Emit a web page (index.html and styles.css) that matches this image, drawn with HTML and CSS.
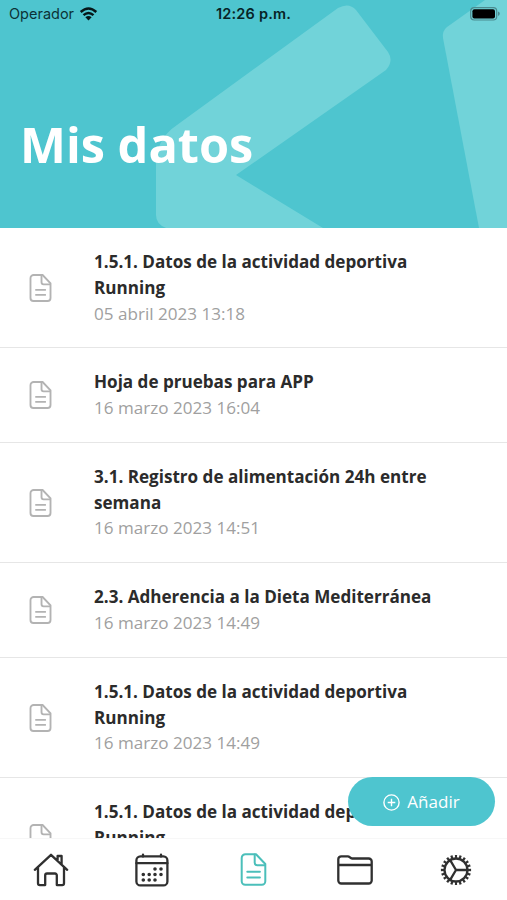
FILE: index.html
```
<!DOCTYPE html>
<html lang="es">
<head>
    <meta charset="UTF-8">
    <meta name="viewport" content="width=device-width, initial-scale=1.0">
    <title>Mis datos</title>
    <link rel="stylesheet" href="styles.css">
</head>
<body>
    <!-- Iconos compartidos -->
    <svg class="sprite">
        <symbol id="icon-doc" viewBox="0 0 26 33">
            <path d="M5 1.2h10.5L24.8 11v17.3a3.5 3.5 0 0 1-3.5 3.5H4.7a3.5 3.5 0 0 1-3.5-3.5V5A3.8 3.8 0 0 1 5 1.2z"/>
            <path d="M14.2 1.6v8.2a2.4 2.4 0 0 0 2.4 2.4h7.8M6.8 18.7h12.6M6.8 24.6h12.6"/>
        </symbol>
    </svg>

    <div class="app">
        <header class="header">
            <svg class="header-shapes" viewBox="0 0 507 228">
                <path d="M338 8Q349 2 356 10L388 52Q394 61 386 70L236 175L323 228H166Q156 224 156 215V164Q156 139 177 125z"/>
                <path d="M507 0H485L447 27Q442 31 443 38L479 228H507z"/>
            </svg>
            <div class="status-bar">
                <div class="status-left">
                    <span>Operador</span>
                    <svg class="wifi" viewBox="0 0 18 14">
                        <path d="M1.2 5Q9-2 16.8 5M4 8.1Q9 3.8 14 8.1" fill="none" stroke="#061719" stroke-width="2.5"/>
                        <path d="M5.9 10.3Q9 7.8 12.1 10.3L9 13.6z" fill="#061719"/>
                    </svg>
                </div>
                <span class="status-time">12:26 p.m.</span>
                <div class="status-right">
                    <svg class="battery" viewBox="0 0 30 14">
                        <rect x=".7" y=".7" width="26" height="12.3" rx="3.5" fill="none" stroke="#4b8b90" stroke-width="1.2"/>
                        <rect x="2.4" y="2.3" width="22.6" height="9.1" rx="2" fill="#000"/>
                        <path d="M28 4.6q1.8.6 1.8 2.2T28 9z" fill="#4b8b90"/>
                    </svg>
                </div>
            </div>
            <h1>Mis datos</h1>
        </header>

        <main class="list">
            <div class="item">
                <svg class="item-icon"><use href="#icon-doc"/></svg>
                <div class="item-text">
                    <h2>1.5.1. Datos de la actividad deportiva Running</h2>
                    <p>05 abril 2023 13:18</p>
                </div>
            </div>
            <div class="item">
                <svg class="item-icon"><use href="#icon-doc"/></svg>
                <div class="item-text">
                    <h2>Hoja de pruebas para APP</h2>
                    <p>16 marzo 2023 16:04</p>
                </div>
            </div>
            <div class="item">
                <svg class="item-icon"><use href="#icon-doc"/></svg>
                <div class="item-text">
                    <h2>3.1. Registro de alimentación 24h entre semana</h2>
                    <p>16 marzo 2023 14:51</p>
                </div>
            </div>
            <div class="item">
                <svg class="item-icon"><use href="#icon-doc"/></svg>
                <div class="item-text">
                    <h2>2.3. Adherencia a la Dieta Mediterránea</h2>
                    <p>16 marzo 2023 14:49</p>
                </div>
            </div>
            <div class="item">
                <svg class="item-icon"><use href="#icon-doc"/></svg>
                <div class="item-text">
                    <h2>1.5.1. Datos de la actividad deportiva Running</h2>
                    <p>16 marzo 2023 14:49</p>
                </div>
            </div>
            <div class="item">
                <svg class="item-icon"><use href="#icon-doc"/></svg>
                <div class="item-text">
                    <h2>1.5.1. Datos de la actividad deportiva Running</h2>
                </div>
            </div>
        </main>

        <button class="button-add">
            <svg class="add-icon" viewBox="0 0 17 17">
                <circle cx="8.5" cy="8.5" r="7.6"/>
                <path d="M8.5 4.7v7.6M4.7 8.5h7.6"/>
            </svg>
            <span>Añadir</span>
        </button>

        <nav class="tabs">
            <a class="tab">
                <svg width="36" height="34" viewBox="0 0 36 34">
                    <path d="M1.8 16.8L18 1.8l16.2 15M5 14.5v15.8a1.8 1.8 0 0 0 1.8 1.8h5.4v-9.8a1.8 1.8 0 0 1 1.8-1.8h8a1.8 1.8 0 0 1 1.8 1.8v9.8h5.4a1.8 1.8 0 0 0 1.8-1.8V14.5M24.6 7V3h4v8"/>
                </svg>
            </a>
            <a class="tab">
                <svg width="34" height="34" viewBox="0 0 34 34">
                    <rect x="1.4" y="3.4" width="31" height="29" rx="4"/>
                    <path d="M1.4 10.2h31M8 1.6v2M26 1.6v2"/>
                    <path class="dots" d="M20 16h0M26 16h0M8.3 21.5h0M14.2 21.5h0M20 21.5h0M26 21.5h0M8.3 27h0M14.2 27h0M20 27h0"/>
                </svg>
            </a>
            <a class="tab active">
                <svg width="27" height="33"><use href="#icon-doc"/></svg>
            </a>
            <a class="tab">
                <svg width="36" height="30" viewBox="0 0 36 30">
                    <path d="M1.3 25.5V4.3a3 3 0 0 1 3-3h6.5c2 0 2.3 2.2 4.3 2.2h16.6a3 3 0 0 1 3 3v19a3 3 0 0 1-3 3H4.3a3 3 0 0 1-3-3zM1.3 10h33.4"/>
                </svg>
            </a>
            <a class="tab">
                <svg width="32" height="32" viewBox="0 0 32 32">
                    <circle cx="16" cy="16" r="11.5"/>
                    <circle class="teeth" cx="16" cy="16" r="13.5" pathLength="100"/>
                    <path d="M16 16h12M16 16L10 5.8M16 16l-6 10.2"/>
                </svg>
            </a>
        </nav>
    </div>
</body>
</html>
```
FILE: styles.css
```
* {
    box-sizing: border-box;
}

body {
    margin: 0;
    font-family: "Open Sans", "Noto Sans", sans-serif;
    background-color: #fff;
    color: #2b2b2b;
}

svg {
    display: block;
    flex-shrink: 0;
}

.sprite {
    display: none;
}

.app {
    position: relative;
    display: flex;
    flex-direction: column;
    height: 900px;
    overflow: hidden;
}

.header {
    position: relative;
    height: 228px;
    flex-shrink: 0;
    background-color: #4ec5cf;
}

.header-shapes {
    position: absolute;
    inset: 0;
    width: 100%;
    height: 100%;
    fill: #71d3d9;
}

.status-bar {
    position: relative;
    display: grid;
    grid-template-columns: 1fr auto 1fr;
    height: 27px;
    padding: 0 7px 0 9px;
    align-items: center;
    font-family: Inter, "Liberation Sans", sans-serif;
    font-size: 14.5px;
    color: #0c3236;
}

.status-left {
    display: flex;
    gap: 5px;
    align-items: center;
}

.wifi {
    width: 19px;
    height: 14px;
}

.status-time {
    margin-right: 2px;
    font-weight: 600;
    letter-spacing: 0.2px;
    color: #072326;
}

.status-right {
    display: flex;
    justify-content: flex-end;
}

.battery {
    width: 30px;
    height: 14px;
}

.header h1 {
    position: relative;
    margin: 84px 0 0 20px;
    font-size: 48.7px;
    line-height: 66px;
    font-weight: 700;
    color: #fff;
}

.list {
    flex: 1;
    min-height: 0;
    overflow: hidden;
}

.item {
    display: flex;
    align-items: center;
    padding: 21.2px 60px 21px 29px;
    border-bottom: 1px solid #e6e6e6;
}

.item-icon {
    width: 23px;
    height: 28px;
    margin-right: 42px;
    fill: none;
    stroke: #b3b3b3;
    stroke-width: 2.2;
}

.item h2,
.item p {
    margin: 0;
    font-size: 17.08px;
    line-height: 25.7px;
}

.item h2 {
    font-weight: 700;
}

.item p {
    color: #a0a0a0;
}

.item:last-child {
    height: 121px;
    align-items: flex-start;
}

.item:last-child .item-icon {
    margin-top: 25px;
}

.button-add {
    position: absolute;
    right: 12px;
    bottom: 74px;
    display: flex;
    align-items: center;
    justify-content: center;
    gap: 7px;
    width: 147px;
    height: 49px;
    padding: 0;
    border: none;
    border-radius: 25px;
    background-color: #4ec5cf;
    color: #fff;
    font-family: inherit;
    font-size: 17px;
}

.add-icon {
    width: 17px;
    height: 17px;
    margin-top: 2px;
    fill: none;
    stroke: #fff;
    stroke-width: 1.4;
}

.tabs {
    display: grid;
    grid-template-columns: repeat(5, 1fr);
    height: 61px;
    flex-shrink: 0;
    align-items: center;
    background-color: #fff;
    box-shadow: 0 -1px 0 #f7f7f7;
}

.tab {
    display: flex;
    justify-content: center;
}

.tab svg {
    fill: none;
    stroke: #303030;
    stroke-width: 2.3;
    stroke-linejoin: round;
    stroke-linecap: round;
}

.tab.active svg {
    stroke: #4bbfba;
    stroke-width: 2;
}

.tab .dots {
    stroke-width: 3.6;
}

.tab .teeth {
    stroke-width: 3.2;
    stroke-linecap: butt;
    stroke-dasharray: 2.5 2.5;
    stroke-dashoffset: 1.25;
}
```
